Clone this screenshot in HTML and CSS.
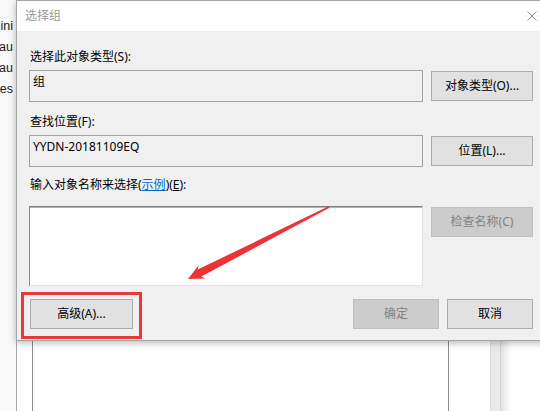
FILE: index.html
```html
<!DOCTYPE html>
<html lang="zh-CN">
<head>
<meta charset="utf-8">
<title>选择组</title>
<link rel="stylesheet" href="styles.css">
</head>
<body>
<div class="desktop">
  <div class="bgwin">
    <div class="userlist">
      <div class="user"><span>Admini</span></div>
      <div class="user"><span>Defau</span></div>
      <div class="user"><span>Defau</span></div>
      <div class="user"><span>Gues</span></div>
    </div>
    <div class="pane">
      <div class="panel"></div>
      <div class="scrollcol"></div>
      <div class="shadowcol"></div>
    </div>
  </div>

  <div class="dialog">
    <div class="titlebar">
      <span class="title">选择组</span>
      <svg class="close" width="10" height="10" viewBox="0 0 10 10">
        <path d="M0.5 0.5 L9.5 9.5 M9.5 0.5 L0.5 9.5" stroke="#8a8a8a" stroke-width="1" fill="none"/>
      </svg>
    </div>
    <div class="content">
      <div class="label first">选择此对象类型(S):</div>
      <div class="field">组</div>
      <div class="btn mid">对象类型(O)...</div>

      <div class="label second">查找位置(F):</div>
      <div class="field">YYDN-20181109EQ</div>
      <div class="btn mid">位置(L)...</div>

      <div class="label third">输入对象名称来选择(<span class="link">示例</span>)(<u>E</u>):</div>
      <div class="namebox"></div>
      <div class="btn top disabled">检查名称(C)</div>

      <div class="footer">
        <div class="adv-wrap">
          <div class="btn adv">高级(A)...</div>
          <div class="highlight"></div>
        </div>
        <div class="footer-right">
          <div class="btn small disabled">确定</div>
          <div class="btn small">取消</div>
        </div>
      </div>
    </div>
  </div>

  <svg class="arrow" width="540" height="411" viewBox="0 0 540 411">
    <polygon fill="#ee3336" points="188,279 198.6,265.2 197.8,269.5 328.6,206.3 329.4,207.7 201.4,276.6 205.4,278.6"/>
  </svg>
</div>
</body>
</html>
```

FILE: styles.css
```css
* { box-sizing: border-box; }

html, body {
  margin: 0;
  padding: 0;
  background: #ffffff;
}

body {
  font-family: "Noto Sans", "Noto Sans CJK SC", sans-serif;
  font-size: 12px;
  color: #000;
}

.desktop {
  position: relative;
  width: 540px;
  height: 411px;
  overflow: hidden;
  background: #ffffff;
}

/* background window */
.bgwin {
  display: flex;
  height: 100%;
}

.userlist {
  width: 17px;
  height: 100%;
  padding-top: 16px;
  background: #f9f9f9;
  border-right: 1px solid #a8a8a8;
  overflow: hidden;
}

.user {
  display: flex;
  justify-content: flex-end;
  width: 13px;
  height: 21px;
  line-height: 21px;
  overflow: hidden;
  white-space: nowrap;
  font-family: "Liberation Sans", sans-serif;
  font-size: 12.5px;
  color: #1a1a1a;
}

.pane {
  flex: 1;
  display: flex;
  height: 100%;
  padding-left: 15px;
  background: #ffffff;
}

.panel {
  width: 417px;
  height: 100%;
  border-left: 1px solid #8c8c8c;
  border-right: 1px solid #8c8c8c;
}

.scrollcol {
  width: 11px;
  height: 100%;
  margin-left: 41px;
  background: #e9e9e9;
  border-left: 1px solid #dcdcdc;
  border-right: 1px solid #d4d4d4;
}

.shadowcol {
  width: 10px;
  height: 100%;
  background: linear-gradient(to right, #e2e2e2, #ffffff);
}

/* dialog window */
.dialog {
  position: absolute;
  top: 0;
  left: 16px;
  width: 540px;
  height: 341px;
  display: flex;
  flex-direction: column;
  border: 1px solid #a6a6a6;
  background: #f0f0f0;
  box-shadow: 0 2px 7px rgba(0, 0, 0, 0.28);
}

.titlebar {
  height: 30px;
  flex: none;
  display: flex;
  align-items: center;
  padding: 0 18px 0 8px;
  background: #ffffff;
}

.title {
  color: #9a9a9a;
  font-size: 12px;
  line-height: 16px;
}

.close {
  margin-left: auto;
  display: block;
}

.content {
  flex: 1;
  display: grid;
  grid-template-columns: 394px 102px;
  column-gap: 8px;
  align-content: start;
  padding: 18px 0 0 12px;
  background: #f0f0f0;
}

.label {
  grid-column: 1 / -1;
  height: 16px;
  line-height: 16px;
  padding-left: 1px;
  white-space: nowrap;
}

.label.second { margin-top: 12px; }
.label.third { margin-top: 10px; }

.link {
  color: #0066cc;
  text-decoration: underline;
}

.field {
  height: 32px;
  margin-top: 5px;
  padding: 3px 3px;
  line-height: 16px;
  background: #f0f0f0;
  border: 1px solid #a2a2a2;
  white-space: nowrap;
}

.namebox {
  height: 80px;
  margin-top: 13px;
  background: #ffffff;
  border: 1px solid;
  border-color: #7a7a7a #e3e3e3 #e3e3e3 #8a8a8a;
  box-shadow: inset 0 1px 0 #b4b4b4;
}

.btn {
  display: flex;
  align-items: center;
  justify-content: center;
  height: 30px;
  background: #e1e1e1;
  border: 1px solid #adadad;
  white-space: nowrap;
  line-height: 16px;
}

.btn.mid {
  margin-top: 5px;
  align-self: center;
}

.btn.top {
  margin-top: 14px;
  align-self: start;
}

.btn.disabled {
  background: #cccccc;
  border-color: #bfbfbf;
  color: #838383;
}

.footer {
  grid-column: 1 / -1;
  display: flex;
  justify-content: space-between;
  margin-top: 13px;
}

.adv-wrap {
  position: relative;
  margin-left: 1px;
}

.btn.adv {
  width: 103px;
}

.highlight {
  position: absolute;
  top: -7px;
  left: -9px;
  right: -9px;
  bottom: -10px;
  border: 3px solid #e5393c;
}

.footer-right {
  display: flex;
  gap: 8px;
}

.btn.small {
  width: 86px;
}

.arrow {
  position: absolute;
  top: 0;
  left: 0;
  pointer-events: none;
}
```
